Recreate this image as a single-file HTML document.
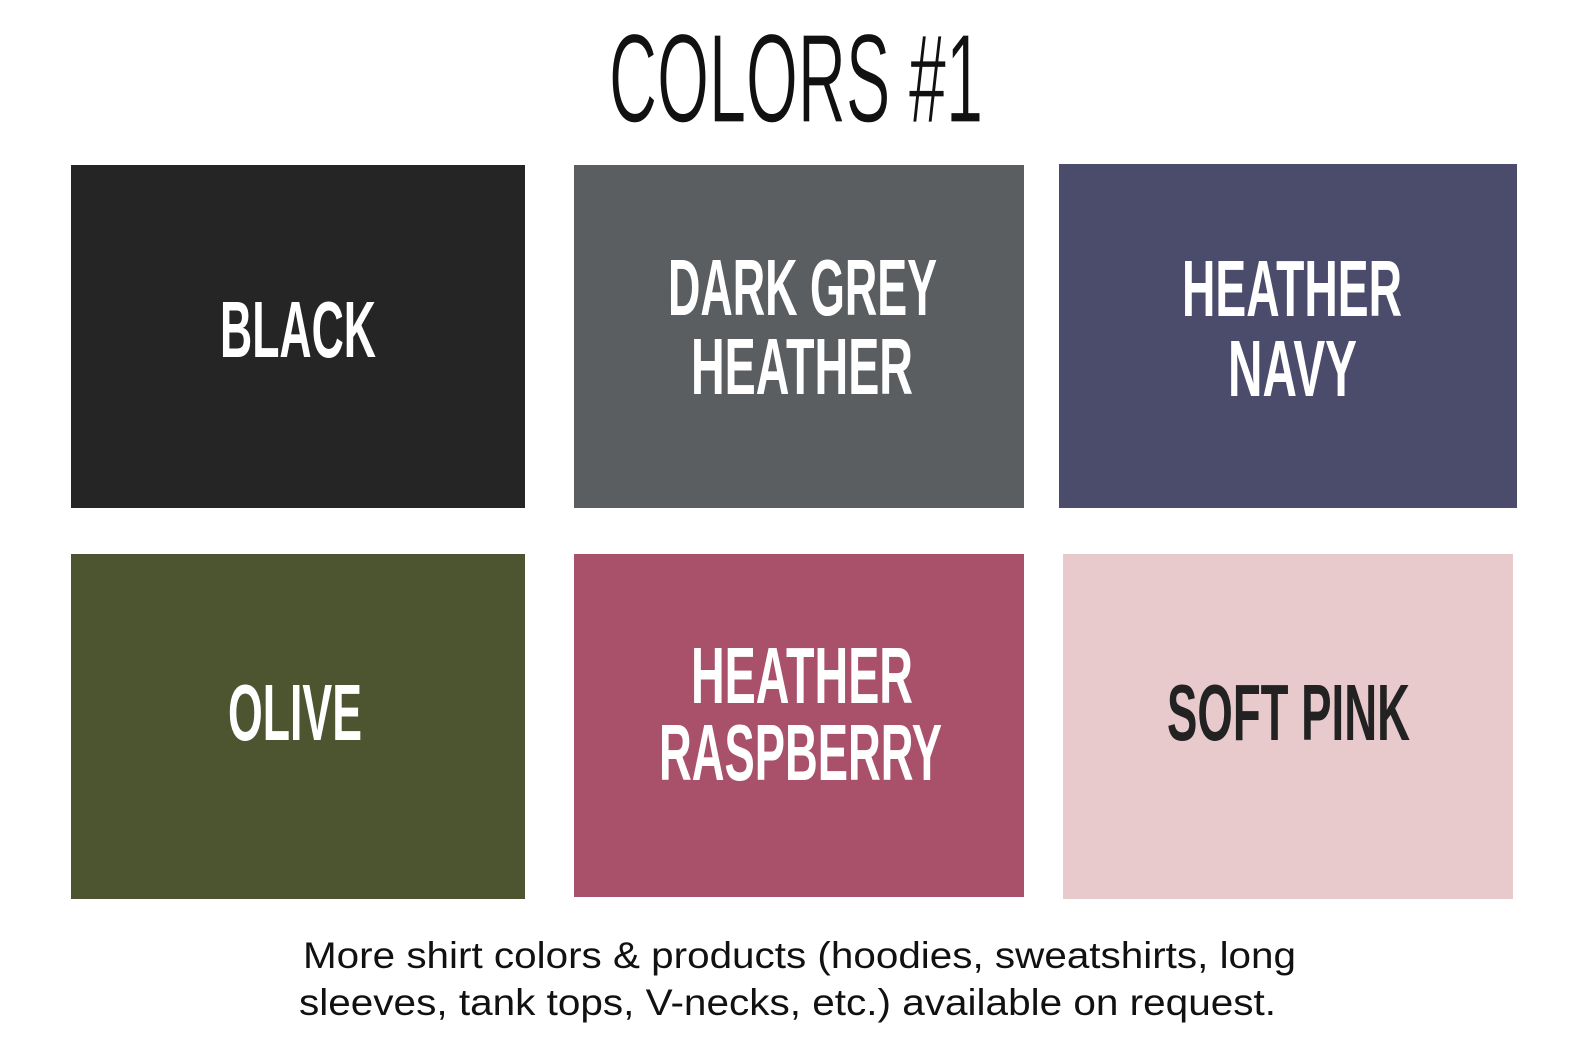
<!DOCTYPE html>
<html><head><meta charset="utf-8"><style>
html,body{margin:0;padding:0;background:#fff;}
svg{display:block;}
</style></head><body>
<svg width="1588" height="1049" viewBox="0 0 1588 1049" xmlns="http://www.w3.org/2000/svg" font-family="'Liberation Sans', sans-serif">
<rect width="1588" height="1049" fill="#fff"/>
<text x="609" y="122" font-size="126" textLength="374" lengthAdjust="spacingAndGlyphs" fill="#111" stroke="#fff" stroke-width="1.2">COLORS #1</text>

<rect x="71" y="165" width="454" height="343" fill="#252525"/>
<rect x="574" y="165" width="450" height="343" fill="#5b5e60"/>
<rect x="1059" y="164" width="458" height="344" fill="#4b4c6b"/>
<rect x="71" y="554" width="454" height="345" fill="#4c5430"/>
<rect x="574" y="554" width="450" height="343" fill="#a9506a"/>
<rect x="1063" y="554" width="450" height="345" fill="#e8c9cc"/>

<g font-weight="bold" font-size="80" fill="#fff">
<text x="220" y="357" textLength="156" lengthAdjust="spacingAndGlyphs">BLACK</text>
<text x="668" y="315" textLength="269" lengthAdjust="spacingAndGlyphs">DARK GREY</text>
<text x="691" y="394" textLength="222" lengthAdjust="spacingAndGlyphs">HEATHER</text>
<text x="1182" y="316" textLength="220" lengthAdjust="spacingAndGlyphs">HEATHER</text>
<text x="1228" y="396" textLength="129" lengthAdjust="spacingAndGlyphs">NAVY</text>
<text x="228" y="740" textLength="134" lengthAdjust="spacingAndGlyphs">OLIVE</text>
<text x="691" y="703" textLength="222" lengthAdjust="spacingAndGlyphs">HEATHER</text>
<text x="659" y="780" textLength="283" lengthAdjust="spacingAndGlyphs">RASPBERRY</text>
<text x="1167" y="740" textLength="243" lengthAdjust="spacingAndGlyphs" fill="#222">SOFT PINK</text>
</g>

<g font-size="37" fill="#111">
<text x="303" y="968" textLength="993" lengthAdjust="spacingAndGlyphs">More shirt colors &amp; products (hoodies, sweatshirts, long</text>
<text x="299" y="1015" textLength="977" lengthAdjust="spacingAndGlyphs">sleeves, tank tops, V-necks, etc.) available on request.</text>
</g>
</svg>
</body></html>
